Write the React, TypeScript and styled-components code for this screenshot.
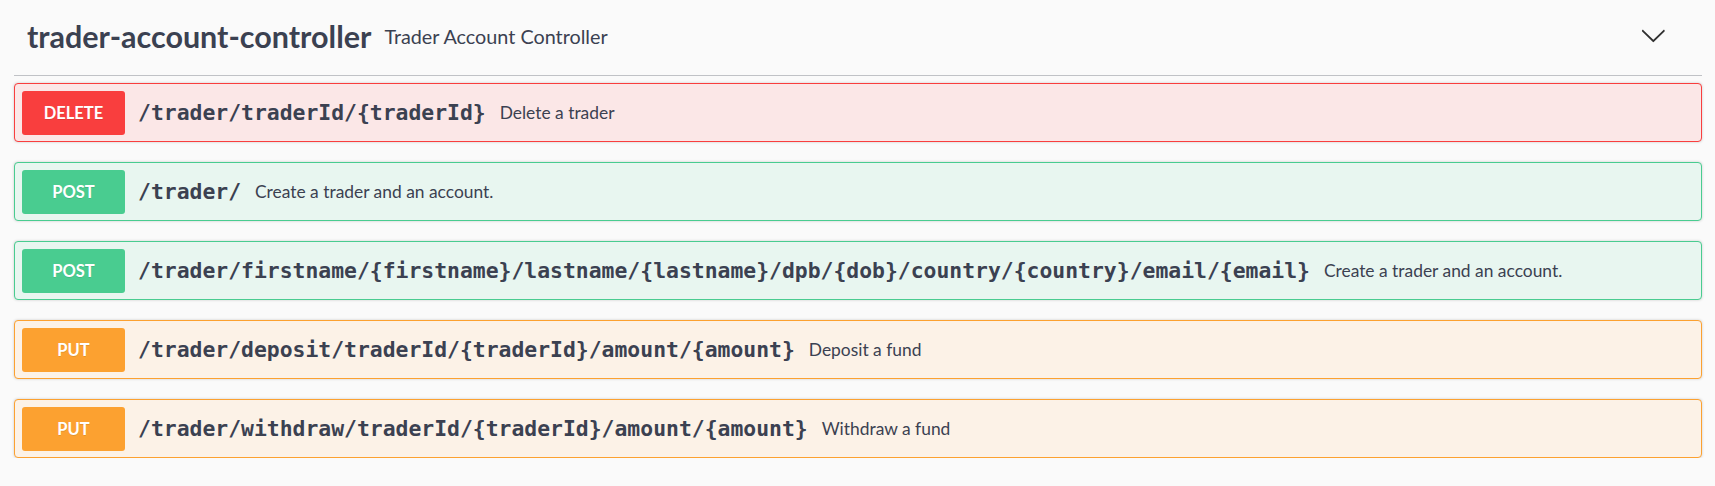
import React from "react";
import styled, { createGlobalStyle } from "styled-components";

const GlobalStyle = createGlobalStyle`
  html, body {
    margin: 0;
    padding: 0;
    background: #fafafa;
  }
  * { box-sizing: border-box; }
`;

type Method = "delete" | "post" | "put";

const palette: Record<Method, { main: string; bg: string }> = {
  delete: { main: "#f93e3e", bg: "#fbe7e7" },
  post: { main: "#49cc90", bg: "#e8f6f0" },
  put: { main: "#fca130", bg: "#fcf2e7" },
};

const Wrapper = styled.div`
  padding: 0 13px 0 14px;
  font-family: Lato, "Open Sans", sans-serif;
  color: #3b4151;
`;

const TagHeader = styled.div`
  display: flex;
  align-items: center;
  height: 76px;
  padding: 0 35px 4px 13px;
  border-bottom: 1px solid rgba(59, 65, 81, 0.3);
`;

const TagTitle = styled.h3`
  margin: 0;
  font-family: Lato, sans-serif;
  font-weight: 700;
  font-size: 30.5px;
  color: #3b4151;
`;

const TagDescription = styled.span`
  margin-left: 13px;
  padding-top: 1px;
  font-family: Lato, sans-serif;
  font-size: 19.8px;
  color: #3b4151;
`;

const Spacer = styled.div`
  flex: 1;
`;

const ExpandButton = styled.button`
  border: none;
  background: none;
  padding: 0;
  margin: 0 0 1px;
  width: 27px;
  height: 27px;
  display: flex;
  align-items: center;
  justify-content: center;
  cursor: pointer;
`;

const OpList = styled.div`
  display: flex;
  flex-direction: column;
  gap: 20px;
  padding-top: 7px;
`;

const OpBlock = styled.div<{ $method: Method }>`
  display: flex;
  align-items: center;
  height: 59px;
  padding: 0 7px;
  border: 1px solid ${(p) => palette[p.$method].main};
  border-radius: 4px;
  background: ${(p) => palette[p.$method].bg};
  box-shadow: 0 0 3px rgba(0, 0, 0, 0.19);
`;

const MethodBadge = styled.span<{ $method: Method }>`
  display: flex;
  align-items: center;
  justify-content: center;
  flex: 0 0 103px;
  height: 44px;
  border-radius: 3px;
  background: ${(p) => palette[p.$method].main};
  color: #fff;
  font-family: Lato, sans-serif;
  font-weight: 700;
  font-size: 16.5px;
  text-shadow: 0 1px 0 rgba(0, 0, 0, 0.1);
`;

const OpPath = styled.span`
  padding: 0 14px 0 13px;
  font-family: "DejaVu Sans Mono", "Liberation Mono", monospace;
  font-weight: 700;
  font-size: 21.4px;
  color: #3b4151;
  white-space: nowrap;
`;

const OpDescription = styled.span`
  font-family: Lato, sans-serif;
  font-size: 17.4px;
  color: #3b4151;
  white-space: nowrap;
`;

const ops: { method: Method; path: string; desc: string }[] = [
  { method: "delete", path: "/trader/traderId/{traderId}", desc: "Delete a trader" },
  { method: "post", path: "/trader/", desc: "Create a trader and an account." },
  {
    method: "post",
    path: "/trader/firstname/{firstname}/lastname/{lastname}/dpb/{dob}/country/{country}/email/{email}",
    desc: "Create a trader and an account.",
  },
  { method: "put", path: "/trader/deposit/traderId/{traderId}/amount/{amount}", desc: "Deposit a fund" },
  { method: "put", path: "/trader/withdraw/traderId/{traderId}/amount/{amount}", desc: "Withdraw a fund" },
];

export default function App() {
  return (
    <>
      <GlobalStyle />
      <Wrapper>
        <TagHeader>
          <TagTitle>trader-account-controller</TagTitle>
          <TagDescription>Trader Account Controller</TagDescription>
          <Spacer />
          <ExpandButton aria-label="collapse">
            <svg width="26.67" height="26.67" viewBox="0 0 20 20" aria-hidden="true">
              <path
                fill="#303030"
                d="M17.418 6.109c.272-.268.709-.268.979 0s.27.701 0 .969l-7.908 7.83c-.27.268-.707.268-.979 0l-7.908-7.83c-.27-.268-.27-.701 0-.969.271-.268.709-.268.979 0L10 13.25l7.418-7.141z"
              />
            </svg>
          </ExpandButton>
        </TagHeader>
        <OpList>
          {ops.map((op, i) => (
            <OpBlock key={i} $method={op.method}>
              <MethodBadge $method={op.method}>{op.method.toUpperCase()}</MethodBadge>
              <OpPath>{op.path}</OpPath>
              <OpDescription>{op.desc}</OpDescription>
            </OpBlock>
          ))}
        </OpList>
      </Wrapper>
    </>
  );
}
